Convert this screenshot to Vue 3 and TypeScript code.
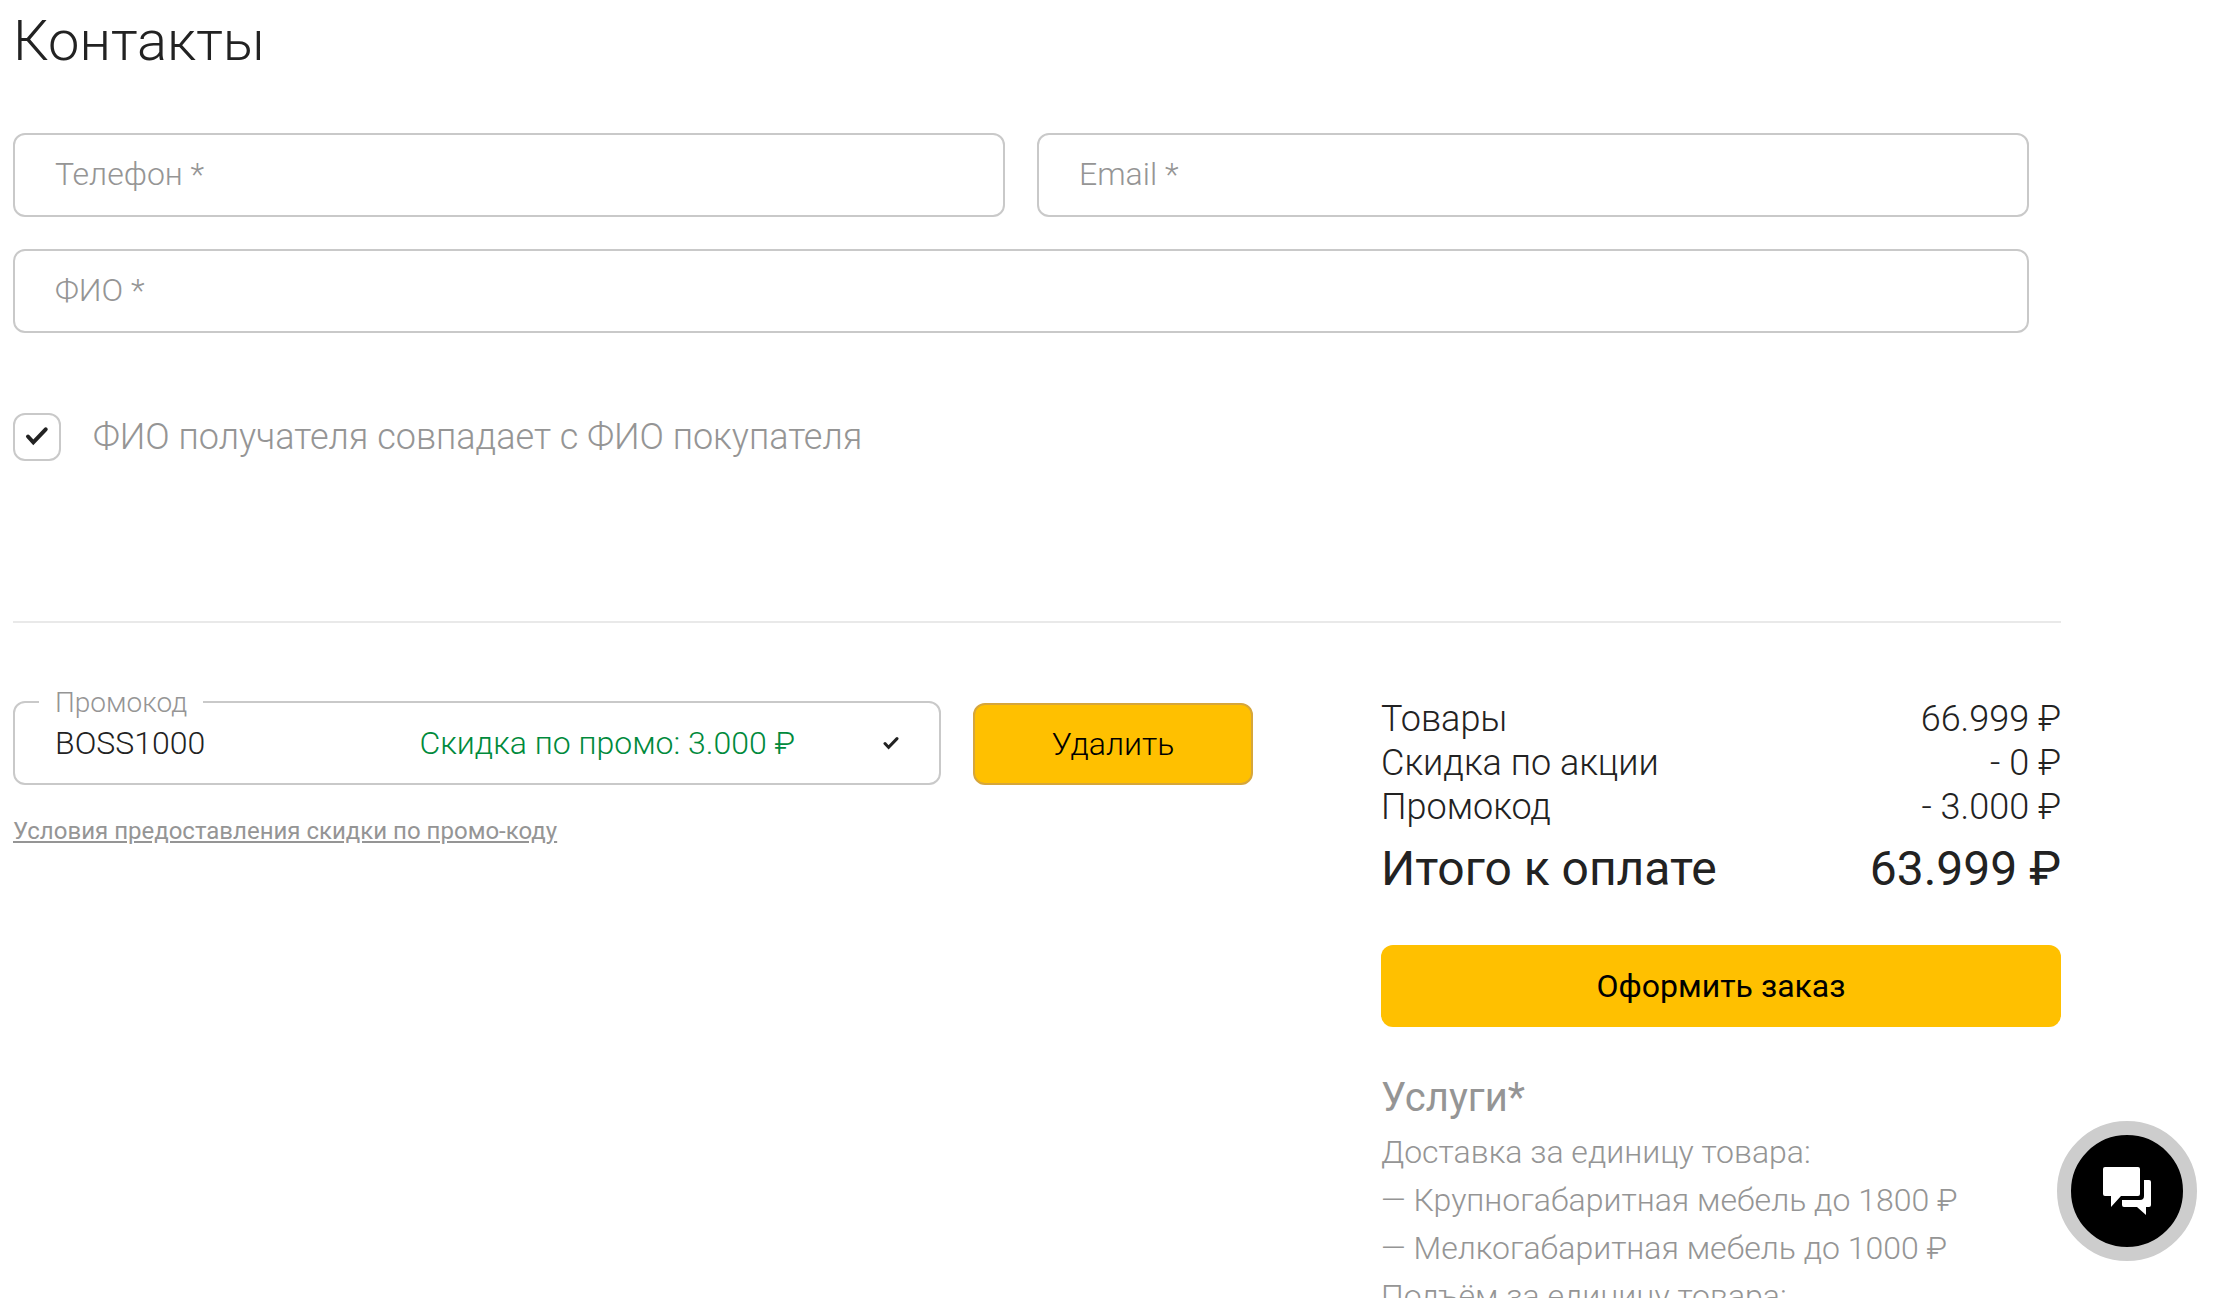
<script setup lang="ts">
import { ref } from 'vue'

interface SummaryRow {
  label: string
  value: string
}

const phone = ref('')
const email = ref('')
const fullName = ref('')
const sameRecipient = ref(true)
const promoCode = ref('BOSS1000')

const rows: SummaryRow[] = [
  { label: 'Товары', value: '66.999 ₽' },
  { label: 'Скидка по акции', value: '- 0 ₽' },
  { label: 'Промокод', value: '- 3.000 ₽' },
]

const services: string[] = [
  'Доставка за единицу товара:',
  '— Крупногабаритная мебель до 1800 ₽',
  '— Мелкогабаритная мебель до 1000 ₽',
  'Подъём за единицу товара:',
]
</script>

<template>
  <main class="page">
    <section class="contacts">
      <h1 class="title">Контакты</h1>
      <form class="fields" @submit.prevent>
        <input v-model="phone" class="field" type="tel" placeholder="Телефон *" aria-label="Телефон" />
        <input v-model="email" class="field" type="email" placeholder="Email *" aria-label="Email" />
        <input v-model="fullName" class="field field-wide" type="text" placeholder="ФИО *" aria-label="ФИО" />
      </form>
      <label class="same">
        <span class="check">
          <input v-model="sameRecipient" class="check-input" type="checkbox" />
          <svg v-if="sameRecipient" class="check-mark" viewBox="0 0 48 48" aria-hidden="true">
            <path d="M15 23.5 20.3 29.3 32.7 16.3" />
          </svg>
        </span>
        <span>ФИО получателя совпадает с ФИО покупателя</span>
      </label>
    </section>

    <div class="checkout">
      <section class="promo">
        <form class="promo-row" @submit.prevent>
          <div class="promo-box">
            <label class="promo-label" for="promo">Промокод</label>
            <input id="promo" v-model="promoCode" class="promo-input" type="text" />
            <span class="promo-discount">Скидка по промо: 3.000 ₽</span>
            <svg class="promo-mark" viewBox="0 0 16 14" aria-hidden="true">
              <path d="M2 7.5 5.6 11.4 14 2.6" />
            </svg>
          </div>
          <button class="remove" type="button">Удалить</button>
        </form>
        <a class="terms" href="#">Условия предоставления скидки по промо-коду</a>
      </section>

      <aside class="summary">
        <dl class="rows">
          <div v-for="row in rows" :key="row.label" class="row">
            <dt>{{ row.label }}</dt>
            <dd>{{ row.value }}</dd>
          </div>
          <div class="row total">
            <dt>Итого к оплате</dt>
            <dd>63.999 ₽</dd>
          </div>
        </dl>
        <button class="order" type="button">Оформить заказ</button>
        <h2 class="services-title">Услуги*</h2>
        <ul class="services">
          <li v-for="item in services" :key="item">{{ item }}</li>
        </ul>
      </aside>
    </div>

    <button class="chat" type="button" aria-label="Чат">
      <svg class="chat-icon" viewBox="0 0 48 48" aria-hidden="true">
        <path d="M2 0H35Q37 0 37 2V27Q37 29 35 29H18L8 40V29H2Q0 29 0 27V2Q0 0 2 0Z" />
        <path d="M41 13H46Q48 13 48 15V38Q48 40 46 40H43V48L34 40H21Q19 40 19 38V33H37Q41 33 41 29Z" />
      </svg>
    </button>
  </main>
</template>

<style>
body {
  margin: 0;
  background: #fff;
}

html {
  scrollbar-width: none;
}
</style>

<style scoped>
.page {
  box-sizing: border-box;
  padding: 9px 159px 0 13px;
  font-family: Roboto, "Liberation Sans", sans-serif;
  font-weight: 300;
  font-size: 32px;
  color: #222;
}

.page * {
  box-sizing: border-box;
}

input,
button {
  margin: 0;
  font: inherit;
  color: inherit;
}

.contacts {
  padding-right: 32px;
}

.title {
  margin: 0 0 60px;
  font-size: 56px;
  line-height: 64px;
  font-weight: 300;
}

.fields {
  display: grid;
  grid-template-columns: 1fr 1fr;
  gap: 32px;
}

.field {
  width: 100%;
  height: 84px;
  padding: 0 40px 2px;
  border: 2px solid #c9c9c9;
  border-radius: 12px;
  background: #fff;
  outline: none;
}

.field::placeholder {
  color: #959595;
  opacity: 1;
}

.field-wide {
  grid-column: 1 / -1;
}

.same {
  display: flex;
  align-items: center;
  gap: 32px;
  margin-top: 80px;
  font-size: 36px;
  line-height: 48px;
  color: #959595;
}

.check {
  display: grid;
  width: 48px;
  height: 48px;
}

.check-input {
  grid-area: 1 / 1;
  appearance: none;
  width: 48px;
  height: 48px;
  border: 2px solid #c9c9c9;
  border-radius: 12px;
  background: #fff;
}

.check-mark {
  grid-area: 1 / 1;
  width: 48px;
  height: 48px;
  pointer-events: none;
}

.check-mark path,
.promo-mark path {
  fill: none;
  stroke: #222;
  stroke-width: 4;
  stroke-linecap: round;
}

.promo-mark path {
  stroke-width: 3;
}

.checkout {
  display: grid;
  grid-template-columns: minmax(0, 31fr) minmax(0, 17fr);
  column-gap: 128px;
  margin-top: 160px;
  padding-top: 74px;
  border-top: 2px solid #e9e9e9;
}

.promo {
  padding-top: 4px;
}

.promo-row {
  display: flex;
  align-items: flex-end;
  gap: 32px;
}

.promo-box {
  position: relative;
  display: flex;
  flex: 1;
  align-items: center;
  min-width: 0;
  height: 84px;
  padding: 0 40px;
  border: 2px solid #c9c9c9;
  border-radius: 12px;
}

.promo-label {
  position: absolute;
  top: -16px;
  left: 24px;
  padding: 0 16px;
  background: #fff;
  font-size: 28px;
  line-height: 32px;
  color: #959595;
}

.promo-input {
  flex: 1;
  min-width: 0;
  padding: 0;
  border: 0;
  background: none;
  outline: none;
}

.promo-discount {
  margin-right: 88px;
  white-space: nowrap;
  color: #008a3c;
}

.promo-mark {
  width: 16px;
  height: 14px;
}

.remove,
.order {
  height: 82px;
  border: 0;
  border-radius: 12px;
  background: #ffc000;
  color: #000;
}

.remove {
  width: 280px;
  border: 2px solid #d6a63b;
}

.terms {
  display: inline-block;
  margin-top: 28px;
  font-size: 24px;
  line-height: 36px;
  font-weight: 400;
  color: #959595;
}

.rows,
.row dd {
  margin: 0;
}

.row {
  display: flex;
  justify-content: space-between;
  font-size: 36px;
  line-height: 44px;
}

.total {
  margin-top: 8px;
  font-size: 48px;
  line-height: 64px;
  font-weight: 400;
}

.order {
  display: block;
  width: 100%;
  margin-top: 44px;
  font-weight: 400;
}

.services-title {
  margin: 47px 0 6px;
  font-size: 40px;
  line-height: 48px;
  font-weight: 400;
  color: #959595;
}

.services {
  margin: 0;
  padding: 0;
  list-style: none;
  line-height: 48px;
  color: #959595;
}

.chat {
  position: fixed;
  right: 23px;
  bottom: 37px;
  display: flex;
  align-items: center;
  justify-content: center;
  width: 140px;
  height: 140px;
  padding: 0;
  border: 14px solid #cdcdcd;
  border-radius: 50%;
  background: #000;
}

.chat-icon {
  width: 48px;
  height: 48px;
  fill: #fff;
}
</style>
